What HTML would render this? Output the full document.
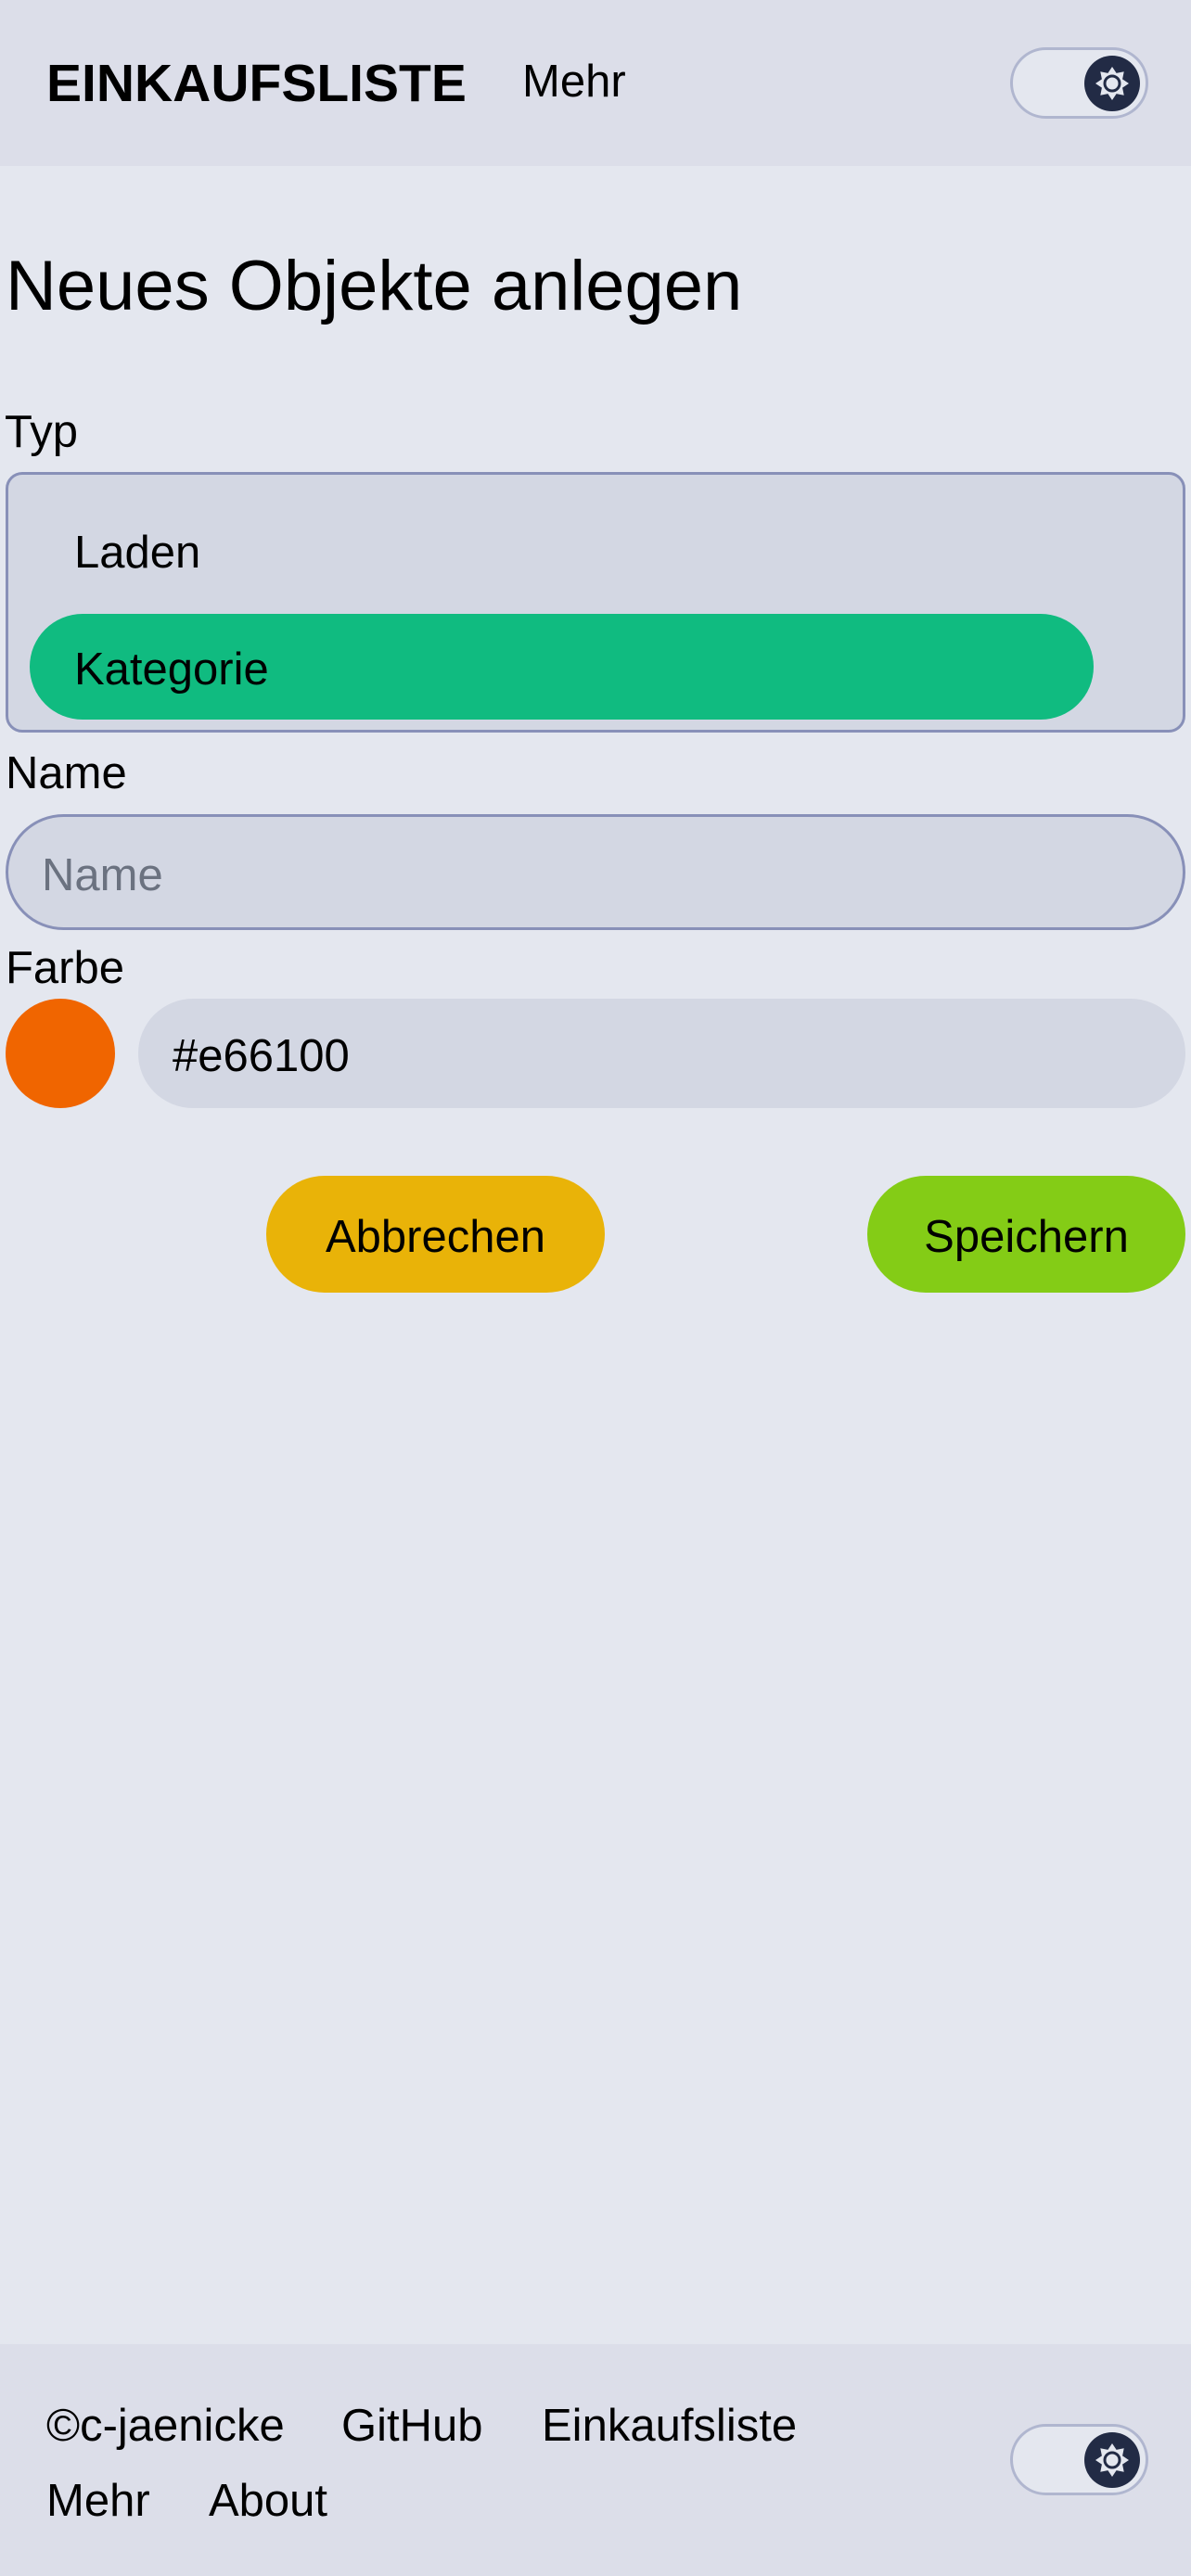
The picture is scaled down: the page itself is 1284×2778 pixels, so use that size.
<!DOCTYPE html>
<html><head><meta charset="utf-8"><style>
*{margin:0;padding:0;box-sizing:border-box}
body{width:1284px;height:2778px;background:#e4e7ef;font-family:"Liberation Sans",sans-serif;color:#000;position:relative;overflow:hidden}
.a{position:absolute;white-space:nowrap}
.t{font-size:49px;line-height:1;margin-top:2px}
.tog{position:absolute;width:149px;height:77px;border:3px solid #b0b6cf;border-radius:40px;background:#e4e7ef}
.tog svg{position:absolute;right:5px;top:5px}
</style></head><body>
<div class="a" style="left:0;top:0;width:1284px;height:179px;background:#dcdee9"></div>
<div class="a" style="left:50px;top:62px;font-size:57px;font-weight:bold;line-height:1">EINKAUFSLISTE</div>
<div class="a t" style="left:563px;top:62px">Mehr</div>
<div class="tog" style="left:1089px;top:51px"><svg width="62" height="62" viewBox="-31 -31 62 62"><circle r="30" fill="#222b45"/><path fill="#e4e7ef" d="M0,-18L4.59,-11.09L12.73,-12.73L11.09,-4.59L18,0L11.09,4.59L12.73,12.73L4.59,11.09L0,18L-4.59,11.09L-12.73,12.73L-11.09,4.59L-18,0L-11.09,-4.59L-12.73,-12.73L-4.59,-11.09Z"/><circle r="8" fill="#e4e7ef" stroke="#222b45" stroke-width="3"/></svg></div>

<div class="a" style="left:6px;top:271px;font-size:76px;line-height:1">Neues Objekte anlegen</div>
<div class="a t" style="left:5px;top:440px">Typ</div>
<div class="a" style="left:6px;top:509px;width:1272px;height:281px;border:3px solid #8890b8;border-radius:18px;background:#d3d7e3"></div>
<div class="a t" style="left:80px;top:570px">Laden</div>
<div class="a" style="left:32px;top:662px;width:1147px;height:114px;border-radius:57px;background:#10bb80"></div>
<div class="a t" style="left:80px;top:696px">Kategorie</div>

<div class="a t" style="left:6px;top:808px">Name</div>
<div class="a" style="left:6px;top:878px;width:1272px;height:125px;border:3px solid #8890b8;border-radius:63px;background:#d3d7e3"></div>
<div class="a t" style="left:45px;top:918px;color:#6b7280">Name</div>

<div class="a t" style="left:6px;top:1018px">Farbe</div>
<div class="a" style="left:6px;top:1077px;width:118px;height:118px;border-radius:50%;background:#f06500"></div>
<div class="a" style="left:149px;top:1077px;width:1129px;height:118px;border-radius:59px;background:#d3d7e3"></div>
<div class="a t" style="left:186px;top:1113px">#e66100</div>

<div class="a" style="left:287px;top:1268px;width:365px;height:126px;border-radius:63px;background:#e9b308"></div>
<div class="a t" style="left:287px;top:1308px;width:365px;text-align:center">Abbrechen</div>
<div class="a" style="left:935px;top:1268px;width:343px;height:126px;border-radius:63px;background:#84cc16"></div>
<div class="a t" style="left:935px;top:1308px;width:343px;text-align:center">Speichern</div>

<div class="a" style="left:0;top:2528px;width:1284px;height:250px;background:#dcdee9"></div>
<div class="a t" style="left:50px;top:2590px">©c-jaenicke</div>
<div class="a t" style="left:368px;top:2590px">GitHub</div>
<div class="a t" style="left:584px;top:2590px">Einkaufsliste</div>
<div class="a t" style="left:50px;top:2671px">Mehr</div>
<div class="a t" style="left:225px;top:2671px">About</div>
<div class="tog" style="left:1089px;top:2614px"><svg width="62" height="62" viewBox="-31 -31 62 62"><circle r="30" fill="#222b45"/><path fill="#e4e7ef" d="M0,-18L4.59,-11.09L12.73,-12.73L11.09,-4.59L18,0L11.09,4.59L12.73,12.73L4.59,11.09L0,18L-4.59,11.09L-12.73,12.73L-11.09,4.59L-18,0L-11.09,-4.59L-12.73,-12.73L-4.59,-11.09Z"/><circle r="8" fill="#e4e7ef" stroke="#222b45" stroke-width="3"/></svg></div>
</body></html>
